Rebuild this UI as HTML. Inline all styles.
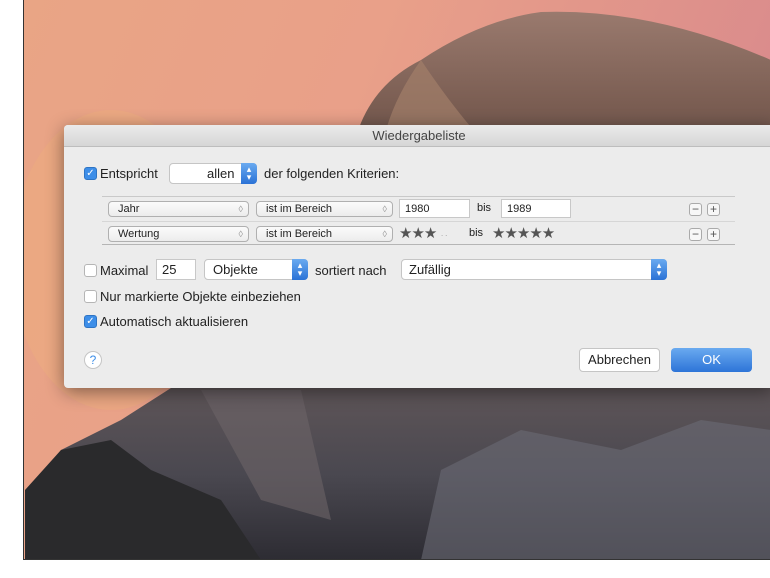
<!DOCTYPE html>
<html><head><meta charset="utf-8"><style>
*{margin:0;padding:0;box-sizing:border-box}
html,body{width:770px;height:578px;overflow:hidden}
body{background:#fff;position:relative;font-family:"Liberation Sans",sans-serif;font-size:13px;color:#222}
.a{position:absolute}
.bg{left:23px;top:0;width:747px;height:560px;border-left:1px solid #333;border-bottom:1px solid #333;overflow:hidden}
.dlg{left:64px;top:125px;width:710px;height:263px;background:#ececec;box-shadow:0 4px 18px rgba(0,0,0,.45);border-radius:4px 0 0 4px}
.tb{left:0;top:0;width:100%;height:22px;background:linear-gradient(#ebebeb,#d6d6d6);border-bottom:1px solid #bdbdbd;text-align:center;line-height:22px;color:#444;border-radius:4px 0 0 0}
.cb{width:13px;height:13px;border:1px solid #b5b5b5;border-radius:3px;background:#fff}
.cb.on{background:#3d8ee8;border-color:#2e74c4;color:#fff;font-size:10px;line-height:11px;text-align:center}
.pop{background:#fff;border:1px solid #c5c5c5;border-radius:4px}
.step{right:-1px;top:-1px;bottom:-1px;width:16px;background:linear-gradient(#6aaaf0,#2a72d6);border-radius:0 4px 4px 0;color:#fff;font-size:9px;text-align:center;line-height:8px;padding-top:2px}
.sp{background:linear-gradient(#fbfbfb,#ececec);border:1px solid #b0b0b0;border-radius:4px;font-size:11px;padding-left:9px;line-height:14px}
.sp i{position:absolute;right:5px;top:0;font-style:normal;color:#999;font-size:9px}
.fld{background:#fff;border:1px solid #c8c8c8;font-size:11px;padding-left:5px;line-height:19px}
.pm{width:13px;height:13px;border:1px solid #aaa;border-radius:3px;background:#f7f7f7;text-align:center;line-height:11px;font-size:12px;color:#555}
.line{height:1px;background:#c9c9c9}
</style></head><body>
<div class="a bg">
<svg width="747" height="560" viewBox="23 0 747 560" style="display:block">
<defs>
<linearGradient id="sky" x1="0" y1="0" x2="1" y2="0.3"><stop offset="0" stop-color="#e9a585"/><stop offset=".45" stop-color="#e9a089"/><stop offset="1" stop-color="#d98a8c"/></linearGradient>
<linearGradient id="dome" x1="0" y1="0" x2="0" y2="1"><stop offset="0" stop-color="#9a7a6e"/><stop offset=".5" stop-color="#7a5d52"/><stop offset="1" stop-color="#5d4a45"/></linearGradient>
<linearGradient id="rock" x1="0" y1="0" x2="0" y2="1"><stop offset="0" stop-color="#5e5558"/><stop offset=".5" stop-color="#4a4850"/><stop offset="1" stop-color="#2d2c33"/></linearGradient>
</defs>
<rect x="23" y="0" width="747" height="560" fill="url(#sky)"/>
<ellipse cx="110" cy="260" rx="100" ry="150" fill="#eeb07e" opacity=".4"/>
<path d="M350 160 Q360 90 420 60 Q480 20 540 12 Q650 8 770 60 L770 200 L350 200Z" fill="url(#dome)"/>
<path d="M420 60 Q460 120 500 160 L560 200 L380 200 Q370 130 420 60Z" fill="#a27f6a" opacity=".7"/>
<path d="M24 560 L24 500 L60 450 L120 420 L170 388 L770 388 L770 560Z" fill="url(#rock)"/>
<path d="M24 490 L60 450 L110 440 L150 470 L220 500 L260 560 L24 560Z" fill="#2a2a2c"/>
<path d="M420 560 L440 470 L520 430 L620 450 L700 420 L770 430 L770 560Z" fill="#6a6a74" opacity=".6"/>
<path d="M200 390 L300 390 L330 520 L260 500Z" fill="#6d6468" opacity=".6"/>
</svg>
</div>
<div class="a dlg">
<div class="a tb">Wiedergabeliste</div>
<div class="a cb on" style="left:20px;top:42px">✓</div>
<div class="a" style="left:36px;top:41px">Entspricht</div>
<div class="a pop" style="left:105px;top:38px;width:88px;height:21px"><span class="a" style="left:37px;top:2px">allen</span><div class="a step">▴<br>▾</div></div>
<div class="a" style="left:200px;top:41px">der folgenden Kriterien:</div>
<div class="a line" style="left:38px;top:71px;width:633px"></div>
<div class="a sp" style="left:44px;top:76px;width:141px;height:16px">Jahr<i>◊</i></div>
<div class="a sp" style="left:192px;top:76px;width:137px;height:16px">ist im Bereich<i>◊</i></div>
<div class="a fld" style="left:335px;top:74px;width:71px;height:19px">1980</div>
<div class="a" style="left:413px;top:77px;font-size:11px">bis</div>
<div class="a fld" style="left:437px;top:74px;width:70px;height:19px">1989</div>
<div class="a pm" style="left:625px;top:78px">−</div><div class="a pm" style="left:643px;top:78px">+</div>
<div class="a line" style="left:38px;top:96px;width:633px;background:#d6d6d6"></div>
<div class="a sp" style="left:44px;top:101px;width:141px;height:16px">Wertung<i>◊</i></div>
<div class="a sp" style="left:192px;top:101px;width:137px;height:16px">ist im Bereich<i>◊</i></div>
<div class="a" style="left:335px;top:99px;font-size:15px;color:#555;letter-spacing:-1px">★★★ <span style="font-size:8px;color:#999">&nbsp;·&nbsp;&nbsp;·</span></div>
<div class="a" style="left:405px;top:102px;font-size:11px">bis</div>
<div class="a" style="left:428px;top:99px;font-size:15px;color:#555;letter-spacing:-1px">★★★★★</div>
<div class="a pm" style="left:625px;top:103px">−</div><div class="a pm" style="left:643px;top:103px">+</div>
<div class="a line" style="left:38px;top:119px;width:633px;background:#b5b5b5"></div>
<div class="a cb" style="left:20px;top:139px"></div>
<div class="a" style="left:36px;top:138px">Maximal</div>
<div class="a fld" style="left:92px;top:134px;width:40px;height:21px;font-size:13px;line-height:19px">25</div>
<div class="a pop" style="left:140px;top:134px;width:104px;height:21px"><span class="a" style="left:8px;top:2px">Objekte</span><div class="a step">▴<br>▾</div></div>
<div class="a" style="left:251px;top:138px">sortiert nach</div>
<div class="a pop" style="left:337px;top:134px;width:266px;height:21px"><span class="a" style="left:7px;top:2px">Zufällig</span><div class="a step">▴<br>▾</div></div>
<div class="a cb" style="left:20px;top:165px"></div>
<div class="a" style="left:36px;top:164px">Nur markierte Objekte einbeziehen</div>
<div class="a cb on" style="left:20px;top:190px">✓</div>
<div class="a" style="left:36px;top:189px">Automatisch aktualisieren</div>
<div class="a" style="left:20px;top:226px;width:18px;height:18px;border:1px solid #c5c5c5;border-radius:50%;background:#fff;color:#3d8ee8;text-align:center;line-height:16px;font-size:12px">?</div>
<div class="a" style="left:515px;top:223px;width:81px;height:24px;background:#fff;border:1px solid #c5c5c5;border-radius:4px;text-align:center;line-height:22px">Abbrechen</div>
<div class="a" style="left:607px;top:223px;width:81px;height:24px;background:linear-gradient(#6aaaf0,#2d74d8);border-radius:4px;text-align:center;line-height:24px;color:#fff">OK</div>
</div>
</body></html>
